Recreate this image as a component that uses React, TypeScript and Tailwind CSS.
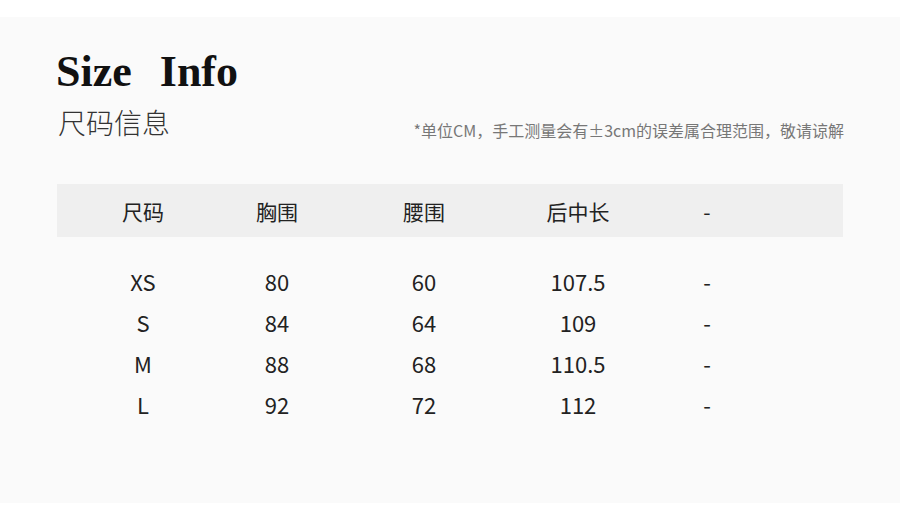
import React from "react";

const cjk = { fontFamily: '"Noto Sans CJK SC", "Noto Sans", sans-serif' };

const rows = [
  ["XS", "80", "60", "107.5", "-"],
  ["S", "84", "64", "109", "-"],
  ["M", "88", "68", "110.5", "-"],
  ["L", "92", "72", "112", "-"],
];

const headers = ["尺码", "胸围", "腰围", "后中长", "-"];

export default function App() {
  return (
    <div className="w-[900px] h-[509px] bg-white overflow-hidden">
      <div className="mt-[17px] h-[486px] bg-[#fafafa] px-[57px] pt-[33px]">
        <div
          className="text-[44px] leading-[44px] font-bold text-[#111] -ml-[1px]"
          style={{ fontFamily: '"Liberation Serif", "Times New Roman", serif', wordSpacing: "17px" }}
        >
          Size Info
        </div>
        <div className="flex justify-between items-start mt-[14px]" style={cjk}>
          <div className="text-[28px] leading-[28px] font-light text-[#333] pl-[1px]">
            尺码信息
          </div>
          <div className="text-[16px] leading-[16px] text-[#777] mt-[14px] -mr-[1px]">
            *单位CM，手工测量会有±3cm的误差属合理范围，敬请谅解
          </div>
        </div>
        <div className="mt-[46px]" style={cjk}>
          <div className="grid grid-cols-[172px_96px_198px_110px_148px] h-[53px] bg-[#efefef] items-center text-[21px] leading-[30px] text-[#222]">
            {headers.map((h, i) => (
              <div key={i} className="text-center whitespace-nowrap">
                {h}
              </div>
            ))}
          </div>
          <div className="mt-[24px]">
            {rows.map((r, ri) => (
              <div
                key={ri}
                className="grid grid-cols-[172px_96px_198px_110px_148px] h-[41px] items-center text-[22px] leading-[41px] text-[#222]"
              >
                {r.map((c, ci) => (
                  <div key={ci} className="text-center whitespace-nowrap">
                    {c}
                  </div>
                ))}
              </div>
            ))}
          </div>
        </div>
      </div>
    </div>
  );
}
